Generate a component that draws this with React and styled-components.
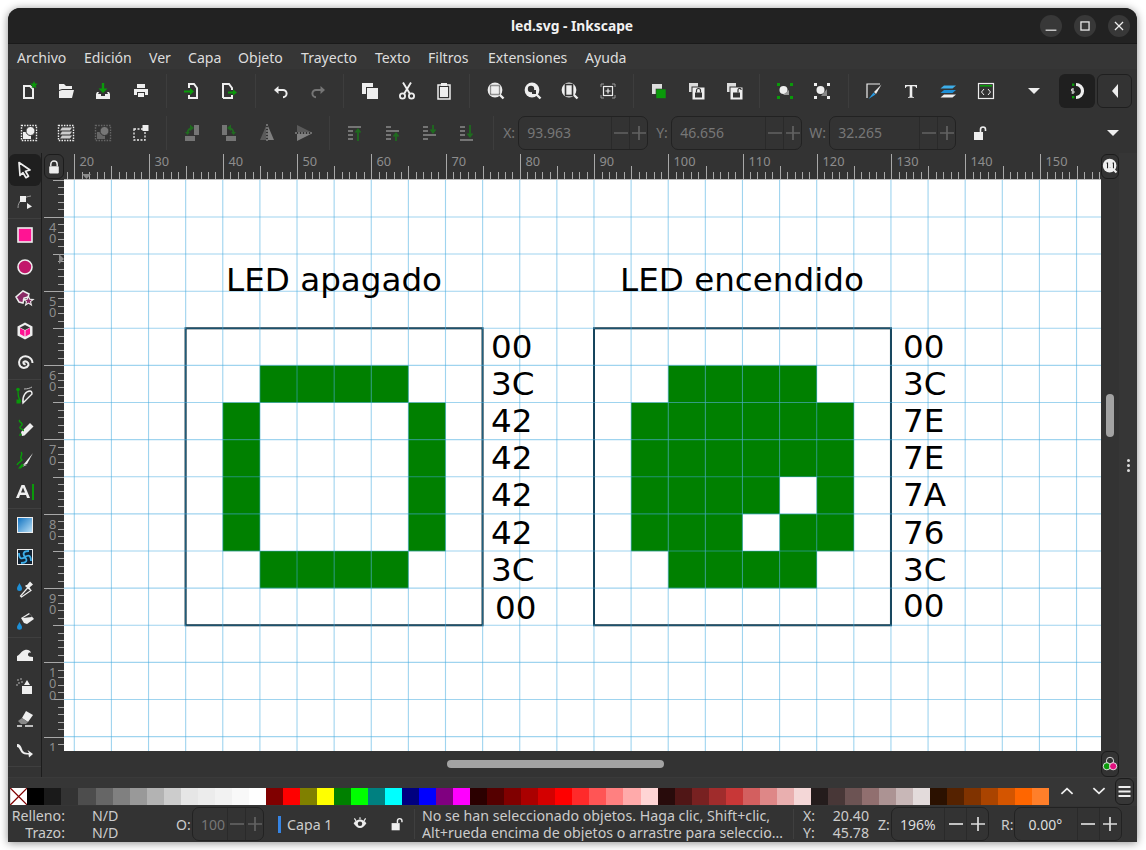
import React from "react";
import styled, { createGlobalStyle } from "styled-components";

const UI = `"Noto Sans", "Open Sans", sans-serif`;
const W = "#eee";
const G = "#0a9a0a";
const D = "#757575";
const DG = "#1f6b1f";

const Global = createGlobalStyle`
  html, body { margin: 0; padding: 0; background: #fff; }
  body { font-family: ${UI}; width: 1146px; height: 850px; overflow: hidden; }
`;

const Win = styled.div`
  margin: 8px 0 0 8px;
  width: 1129px;
  height: 834px;
  background: #333;
  border-radius: 12px 12px 0 0;
  box-shadow: 0 1px 9px rgba(0, 0, 0, 0.45);
  display: flex;
  flex-direction: column;
  overflow: hidden;
  color: #ddd;
`;
const TitleBar = styled.div`
  height: 36px;
  flex: none;
  box-sizing: border-box;
  background: #222;
  border-bottom: 1px solid #1a1a1a;
  display: flex;
  align-items: center;
  justify-content: center;
  position: relative;
`;
const Title = styled.div`
  font-weight: 700;
  font-size: 13.8px;
  color: #f2f2f2;
  margin-left: -1px;
`;
const WinButtons = styled.div`
  position: absolute;
  right: 7px;
  top: 7px;
  display: flex;
  gap: 12px;
`;
const WinBtn = styled.div`
  width: 22px;
  height: 22px;
  border-radius: 50%;
  background: #383838;
  display: flex;
  align-items: center;
  justify-content: center;
`;
const MenuBar = styled.div`
  height: 25px;
  flex: none;
  box-sizing: border-box;
  padding: 2px 0 0 9px;
  display: flex;
  align-items: center;
  font-size: 14.1px;
  color: #ddd;
  background: #363636;
`;
const MenuItem = styled.div`
  width: ${(p) => p.$w}px;
  white-space: nowrap;
`;
const Toolbar = styled.div`
  height: ${(p) => p.$h}px;
  flex: none;
  display: flex;
  align-items: center;
  padding-left: 2px;
  padding-right: 5px;
  box-sizing: border-box;
`;
const Tool = styled.div`
  width: 37.3px;
  height: 34px;
  flex: none;
  margin-left: ${(p) => p.$ml || 0}px;
  display: flex;
  align-items: center;
  justify-content: center;
`;
const Sep = styled.div`
  width: 1px;
  height: 34px;
  flex: none;
  margin: 0 6.6px;
  background: #3d3d3d;
`;
const Push = styled.div`
  margin-left: auto;
`;
const FlatBtn = styled.div`
  width: ${(p) => p.$w}px;
  height: 34px;
  flex: none;
  margin-left: ${(p) => p.$ml || 0}px;
  border-radius: 6px;
  background: ${(p) => (p.$on ? "#1f1f1f" : "#333")};
  border: ${(p) => (p.$on ? "none" : "1px solid #1f1f1f")};
  box-sizing: border-box;
  display: flex;
  align-items: center;
  justify-content: center;
`;
const FieldLabel = styled.div`
  font-size: 14px;
  color: ${(p) => (p.$dim ? "#777" : "#ccc")};
  width: ${(p) => p.$w}px;
  margin-left: ${(p) => p.$ml || 0}px;
  flex: none;
`;
const Spin = styled.div`
  width: ${(p) => p.$w}px;
  height: 34px;
  flex: none;
  margin-left: ${(p) => p.$ml || 0}px;
  box-sizing: border-box;
  border: 1px solid #222;
  border-radius: 7px;
  display: flex;
  align-items: stretch;
  font-size: 14px;
  color: ${(p) => (p.$dim ? "#777" : "#ddd")};
`;
const SpinValue = styled.div`
  flex: 1;
  padding-left: ${(p) => p.$pad}px;
  display: flex;
  align-items: center;
  white-space: nowrap;
`;
const SpinStep = styled.div`
  width: ${(p) => p.$w}px;
  flex: none;
  border-left: 1px solid #2a2a2a;
  display: flex;
  align-items: center;
  justify-content: center;
`;
const Main = styled.div`
  height: 624px;
  flex: none;
  display: flex;
`;
const ToolBox = styled.div`
  width: 34px;
  flex: none;
  box-sizing: border-box;
  border-right: 1px solid #1c1c1c;
  padding-top: 1px;
  overflow: hidden;
`;
const BoxTool = styled.div`
  height: 32px;
  margin-left: 1px;
  width: 32px;
  border-radius: 6px;
  background: ${(p) => (p.$on ? "#1f1f1f" : "transparent")};
  display: flex;
  align-items: center;
  justify-content: center;
`;
const BoxSep = styled.div`
  height: 1px;
  background: #3f3f3f;
`;
const Board = styled.div`
  flex: none;
  width: 1077px;
  display: grid;
  grid-template-columns: 22px 1037px 18px;
  grid-template-rows: 26px 572px 26px;
`;
const CornerBtn = styled.div`
  margin: 1px 0 0 2px;
  box-sizing: border-box;
  border: 1px solid #1c1c1c;
  border-radius: 6px;
  display: flex;
  align-items: center;
  justify-content: center;
  height: 25px;
  width: 20px;
  background: #333;
`;
const ZoomBtn = styled(CornerBtn)`
  margin: 1px 0 0 0;
  width: 18px;
`;
const RulerSvg = styled.svg`
  display: block;
  background: #333;
  text {
    font-family: ${UI};
    font-size: 12.8px;
    fill: #8d8d8d;
  }
`;
const CanvasSvg = styled.svg`
  display: block;
  background: #fff;
  text {
    font-family: "DejaVu Sans", sans-serif;
    font-size: 32.6px;
    fill: #000;
  }
`;
const VScroll = styled.div`
  position: relative;
`;
const VThumb = styled.div`
  position: absolute;
  left: 5px;
  top: 215px;
  width: 8px;
  height: 43px;
  border-radius: 4px;
  background: #a3a3a3;
`;
const HScroll = styled.div`
  position: relative;
`;
const HThumb = styled.div`
  position: absolute;
  left: 383px;
  top: 9px;
  height: 8px;
  width: 217px;
  border-radius: 4px;
  background: #a3a3a3;
`;
const ModeBtn = styled(ZoomBtn)`
  margin: 0;
  height: 26px;
`;
const DotPane = styled.div`
  flex: 1;
  display: flex;
  flex-direction: column;
  align-items: center;
  justify-content: center;
  gap: 2px;
  background: #363636;
`;
const Dot = styled.div`
  width: 3px;
  height: 3px;
  border-radius: 50%;
  background: #ddd;
`;
const PaletteRow = styled.div`
  height: 29px;
  flex: none;
  display: flex;
  align-items: flex-end;
  padding: 0 3px 1px 2px;
  border-top: 1px solid #3a3a3a;
  box-sizing: border-box;
  background: #363636;
`;
const Swatch = styled.div`
  width: 17.04px;
  height: 17px;
  flex: none;
  background: ${(p) => p.$c};
`;
const NoneSwatch = styled.svg`
  width: 17.4px;
  height: 17px;
  flex: none;
  display: block;
`;
const PalArrow = styled.div`
  width: 32px;
  height: 26px;
  flex: none;
  display: flex;
  align-items: center;
  justify-content: center;
  align-self: flex-start;
`;
const PalMenu = styled.div`
  width: 19px;
  height: 27px;
  flex: none;
  box-sizing: border-box;
  border: 1px solid #1c1c1c;
  border-radius: 6px;
  display: flex;
  align-items: center;
  justify-content: center;
`;
const StatusBar = styled.div`
  height: 36px;
  flex: none;
  display: flex;
  align-items: center;
  font-size: 14.2px;
  color: #ccc;
  background: #333;
`;
const FillGrid = styled.div`
  width: 159px;
  flex: none;
  display: grid;
  grid-template-columns: 57px 1fr;
  column-gap: 27px;
  line-height: 17px;
`;
const FillLabel = styled.div`
  text-align: right;
  white-space: nowrap;
`;
const LayerBar = styled.div`
  width: 3px;
  height: 17px;
  margin-left: 14px;
  flex: none;
  background: #3584e4;
`;
const LayerName = styled.div`
  width: 58px;
  margin-left: 6px;
  flex: none;
`;
const StatusIcon = styled.div`
  width: ${(p) => p.$w}px;
  margin-left: ${(p) => p.$ml || 0}px;
  flex: none;
  display: flex;
  justify-content: center;
`;
const StatusSep = styled.div`
  width: 1px;
  height: 30px;
  flex: none;
  background: #3f3f3f;
  margin-right: ${(p) => p.$mr}px;
`;
const Message = styled.div`
  width: 371px;
  flex: none;
  line-height: 17px;
  white-space: nowrap;
  overflow: hidden;
`;
const CoordGrid = styled.div`
  width: 66px;
  flex: none;
  display: grid;
  grid-template-columns: 22px 1fr;
  line-height: 17px;
  text-align: right;
  span:nth-child(odd) {
    text-align: left;
  }
`;

/* icons */
const Svg = styled.svg`
  display: block;
  flex: none;
`;
const Ico = ({ s = 20, children }) => (
  <Svg width={s} height={s} viewBox="0 0 20 20">
    {children}
  </Svg>
);
const lens = (inner) => (
  <>
    <path d="M13 13l4.5 4.5" stroke={W} strokeWidth="2.4" />
    <circle cx="9" cy="9" r="7.4" fill={W} />
    {inner}
  </>
);
const star = (c, x, y, r) => {
  let d = "";
  for (let i = 0; i < 10; i++) {
    const a = (i * Math.PI) / 5 - Math.PI / 2;
    const q = i % 2 ? r * 0.42 : r;
    d += `${i ? "L" : "M"}${(x + q * Math.cos(a)).toFixed(1)} ${(y + q * Math.sin(a)).toFixed(1)}`;
  }
  return <path d={d + "z"} fill={c} />;
};
const lockIn = (c, open) => (
  <>
    <rect x="9" y="11.5" width="7" height="5" fill={c} />
    <path
      d={open ? "M14 11.5V9a1.6 1.6 0 0 1 3.200 0" : "M10.500 11.500V9.500a2 2 0 0 1 4 0v2"}
      fill="none"
      stroke={c}
      strokeWidth="1.200"
    />
  </>
);
const handles = (c) => (
  <g fill={c}>
    <rect x="2" y="2" width="3" height="3" />
    <rect x="15" y="2" width="3" height="3" />
    <rect x="2" y="15" width="3" height="3" />
    <rect x="15" y="15" width="3" height="3" />
  </g>
);
const dotted = (c) => <rect x="2.5" y="2.5" width="15" height="15" fill="none" stroke={c} strokeWidth="1.4" strokeDasharray="1.5 1.2" />;
/* align icons: four bars, one of them long, and an arrow */
const alignBars = (ys, long, arrow) => (
  <>
    {ys.map((y, i) => (
      <rect key={y} x="3" y={y} width={i === long ? 13 : 5} height="2" fill={D} />
    ))}
    <path d={arrow} stroke={DG} strokeWidth="1.800" fill="none" />
  </>
);

const icons = {
  new: (<><path d="M5 5h6l3 3v9H5z" fill="none" stroke={W} strokeWidth="2" />{star(G, 15, 4, 4)}</>),
  open: <path d="M3 3h5l2 2h6v3H6l-3 1zM3 10l3-1h12l-2 8H3z" fill={W} />,
  save: (<><path d="M10 2v8" stroke={G} strokeWidth="2.400" /><path d="M5.500 7.500L10 12l4.500-4.500z" fill={G} /><path d="M4 11l-1 2v5h14v-5l-1-2h-2l1 2h-3v2H8v-2H5l1-2z" fill={W} /></>),
  print: <path d="M6 3h8v4H6zM3 8h14v6h-3v-3H6v3H3zM7 12h6v4H7z" fill={W} />,
  imp: (<><path d="M7 7V3h5l3 4v10H7v-3" fill="none" stroke={W} strokeWidth="2" /><path d="M2 10.500h7" stroke={G} strokeWidth="2" /><path d="M8 7l4 3.500L8 14z" fill={G} /></>),
  exp: (<><path d="M4 17V3h6l3 4v2M13 14v3H4" fill="none" stroke={W} strokeWidth="2" /><path d="M9 11.500h6" stroke={G} strokeWidth="2" /><path d="M14 8.500l4 3-4 3z" fill={G} /></>),
  undo: (<><path d="M6 9h6a3.600 3.600 0 0 1 0 7.200" fill="none" stroke={W} strokeWidth="2" /><path d="M7.500 5L3 9l4.500 4z" fill={W} /></>),
  redo: (<><path d="M14 9H8a3.600 3.600 0 0 0 0 7.200" fill="none" stroke={D} strokeWidth="2" /><path d="M12.500 5L17 9l-4.500 4z" fill={D} /></>),
  copy: (<><rect x="2" y="2" width="11" height="11" fill={W} /><rect x="6.500" y="6.500" width="12" height="12" fill={W} stroke="#333" /></>),
  cut: (<><circle cx="5.500" cy="15" r="2.600" fill="none" stroke={W} strokeWidth="1.800" /><circle cx="14.500" cy="15" r="2.600" fill="none" stroke={W} strokeWidth="1.800" /><path d="M7 13L14 1.500M13 13L6 1.500" stroke={W} strokeWidth="1.900" /></>),
  paste: (<><path d="M4 4h12v14H4z" fill="none" stroke={W} strokeWidth="1.500" /><path d="M7 2h6v3H7z" fill={W} /><path d="M6 6h8v10H6z" fill={W} /></>),
  zsel: lens(<rect x="4.500" y="4.500" width="9" height="9" fill="none" stroke="#333" strokeWidth="1.300" strokeDasharray="1 1" />),
  zdraw: lens(<><circle cx="8" cy="8" r="3.200" fill="#333" /><rect x="9" y="9" width="4" height="4" fill="#333" /></>),
  zpage: lens(<rect x="5.500" y="3.500" width="7" height="11" fill={W} stroke="#333" strokeWidth="1.600" />),
  zcenter: (<><path d="M3 6V3h3M14 3h3v3M3 14v3h3M14 17h3v-3" stroke="#999" fill="none" /><rect x="5.500" y="5.500" width="9" height="9" fill="none" stroke={W} strokeWidth="1.200" /><path d="M10 7.500v5M7.500 10h5" stroke={W} strokeWidth="1.200" /></>),
  dup: (<><rect x="3" y="3" width="10" height="10" fill="#ddd" /><rect x="7" y="8" width="10" height="9.500" fill={G} stroke="#333" strokeWidth="0.600" /></>),
  clone: (<><rect x="3" y="2" width="9" height="9" fill="#ddd" /><rect x="6" y="6" width="13" height="13" fill={W} stroke="#333" />{lockIn("#333")}</>),
  unclone: (<><rect x="3" y="2" width="9" height="9" fill="#ddd" /><rect x="6" y="6" width="13" height="13" fill={W} stroke="#333" />{lockIn("#333", true)}</>),
  group: (<>{handles(G)}<circle cx="8.500" cy="9" r="4" fill={W} /><path d="M8 14h6V9z" fill="#999" /></>),
  ungroup: (<>{handles(W)}<circle cx="8.500" cy="9" r="4" fill={W} /><path d="M9 15h6V8z" fill="#888" /></>),
  fillstroke: (<><path d="M3 17V3h13" fill="none" stroke={W} strokeWidth="1.200" /><path d="M17.500 3.500L10 11l2 2z" fill={W} /><path d="M9.500 11.500l2 2-7 4.500z" fill="#2a9ae0" /></>),
  text: <path d="M4 4h12v3h-.8c-.2-1-.7-1.700-2-1.700h-1.900V15c0 .8.400 1 1.700 1v.700H7v-.7c1.300 0 1.700-.2 1.700-1V5.300H6.800c-1.300 0-1.800.7-2 1.700H4z" fill={W} />,
  layers: (<><path d="M6 4.500h12l-3.500 3H2.500z" fill="#3daee9" /><path d="M6 9h12l-3.500 3H2.500z" fill="#1d8fd6" /><path d="M6 13.500h12l-3.500 3H2.500z" fill={W} /></>),
  xml: (<><rect x="2.500" y="2.500" width="15" height="15" fill="none" stroke={W} strokeWidth="1.200" /><rect x="4" y="4" width="12" height="1.600" fill={G} /><path d="M8 8l-2.500 3L8 14M12 8l2.500 3-2.500 3" fill="none" stroke={W} strokeWidth="1" /></>),
  down: <path d="M4 7h12l-6 6z" fill={W} />,
  snap: (<><path d="M9 3.500a6.500 6.500 0 0 1 0 13" fill="none" stroke={W} strokeWidth="3.200" /><rect x="5" y="2.500" width="2.400" height="2.400" fill={G} /><rect x="5" y="15" width="2.400" height="2.400" fill={G} /><path d="M7 8H4.500v2H7v2H4.500M5.800 7.200v5.600" fill="none" stroke={W} strokeWidth="0.800" /></>),
  left: <path d="M13 3v14l-6-7z" fill={W} />,
  lockOpen: (<><rect x="4" y="9" width="9" height="8" fill={W} /><path d="M10.500 9V6.500a2.500 2.500 0 0 1 5 0V8" fill="none" stroke={W} strokeWidth="1.600" /></>),
  selAll: (<>{dotted(W)}<rect x="4" y="9" width="8" height="7" fill={W} /><circle cx="11.500" cy="8" r="4.500" fill={W} stroke="#333" /></>),
  selLayers: (<>{dotted(W)}<path d="M6 4.500h10l-2 3H4zM6 8.500h10l-2 3H4zM6 12.500h10l-2 3H4z" fill="#ccc" /></>),
  selDim: (<>{dotted("#666")}<rect x="4" y="9" width="8" height="7" fill="#666" /><circle cx="11.500" cy="8" r="4.500" fill="#777" stroke="#333" /></>),
  touch: (<><rect x="3" y="6" width="11" height="11" fill="none" stroke={W} strokeDasharray="2 1.500" strokeWidth="1.300" /><rect x="11.500" y="2" width="6" height="6" fill={W} /></>),
  rotL: (<><rect x="12" y="2" width="5" height="10" fill={D} /><rect x="3" y="13" width="10" height="5" fill={D} /><path d="M10.500 5a5 5 0 0 0-5 5" stroke={DG} strokeWidth="2" fill="none" /><path d="M8 1.500L12 5 8 8z" fill={DG} /><path d="M3 9h5l-2.500 3z" fill={DG} /></>),
  rotR: (<><rect x="3" y="2" width="5" height="10" fill={D} /><rect x="7" y="13" width="10" height="5" fill={D} /><path d="M9.500 5a5 5 0 0 1 5 5" stroke={DG} strokeWidth="2" fill="none" /><path d="M12 1.500L8 5l4 3z" fill={DG} /><path d="M17 9h-5l2.500 3z" fill={DG} /></>),
  flipH: (<><path d="M9 3v14H3z" fill="#5a5a5a" /><path d="M11 3v14h6z" fill="#808080" /><path d="M10 1v18" stroke="#aaa" strokeDasharray="2 1" /></>),
  flipV: (<><path d="M3 2l14 7H3z" fill="#5a5a5a" /><path d="M3 11h14L3 18z" fill="#808080" /><path d="M1 10h18" stroke="#aaa" strokeDasharray="2 1" /></>),
  top: alignBars([3, 7, 11, 15], 0, "M13 18V7M10.500 9.500L13 6.500l2.500 3"),
  raise: alignBars([3, 7, 11, 15], 1, "M13 18v-7M10.500 13.500l2.500-3 2.500 3"),
  lower: alignBars([3, 7, 11, 15], 2, "M13 2v7M10.500 6.500l2.500 3 2.500-3"),
  bottom: alignBars([3, 7, 11, 16], 3, "M13 2v11M10.500 10.500l2.500 3 2.500-3"),
  arrow: <path d="M4 2.500l11 7.500-4.500 1.200 3 5-2.500 1.500-3-5L5 15.500z" fill="#1f1f1f" stroke={W} strokeWidth="1.700" strokeLinejoin="round" />,
  node: (<><path d="M3 16c0-7 5-11 13-12" fill="none" stroke="#999" /><rect x="5" y="4" width="6" height="6" fill={W} /><path d="M12 11l5 3.500-5 2.500z" fill={W} /></>),
  rect: <rect x="3" y="3" width="14" height="14" fill="#ff1493" stroke={W} strokeWidth="1.600" />,
  circle: <circle cx="10" cy="10" r="7" fill="#c2186b" stroke={W} strokeWidth="1.600" />,
  star: (<><path d="M8 2l6 3-1 3-4 1-1 5-4-1-3-5z" fill="#8a2a66" stroke={W} strokeWidth="1.500" />{star(W, 13.500, 12, 6.500)}{star("#8a2a66", 13.500, 12, 3.500)}</>),
  box: (<><path d="M10 1.500l7.500 4v9l-7.500 4-7.500-4v-9z" fill={W} /><path d="M5 7l4.500 2.500v6L5 13z" fill="#ff1493" /><path d="M15 7l-4.500 2.500v6L15 13z" fill="#ff1493" /><path d="M10 4l5 2.500L10 9 5 6.500z" fill="#333" /></>),
  spiral: <path d="M10.500 11a1.500 1.500 0 0 1-2-2 3.200 3.200 0 0 1 5 3 5 5 0 0 1-8 1.500A6.200 6.200 0 0 1 6 5a7 7 0 0 1 11.500 5" fill="none" stroke={W} strokeWidth="2" />,
  pen: (<><path d="M3 4c0 5 0 8 3 12" fill="none" stroke={G} strokeWidth="1.200" /><circle cx="3" cy="3.500" r="1.800" fill={G} /><rect x="1.500" y="13.500" width="4" height="4" fill={G} /><path d="M9 3c4 0 6-1 8-2" fill="none" stroke="#bbb" /><path d="M8 17l9-9c0-2-.5-3-2-3-4 0-8 5-7 12z" fill="#333" stroke={W} strokeWidth="1.400" /></>),
  pencil: (<><path d="M7 18l-1-4 9-9 3.500 3.500-9 9z" fill={W} /><path d="M4 18l3-1-2-2z" fill={G} /><path d="M5 2c-3 2 5 3 1 6s4 3 2 5" fill="none" stroke={G} strokeWidth="1.500" /></>),
  calli: (<><path d="M9 14L18 3l-6 11z" fill={W} /><path d="M9 13.500l3 1.500-5 2z" fill="#bbb" /><path d="M3 18.500l4-5 2 2-3 3z" fill={G} /><path d="M6 2c3 3-3 5 1 8-2 2-4 3-5 5" fill="none" stroke={G} strokeWidth="1.400" /></>),
  atext: (<><path d="M1 16L6.500 3h3L15 16h-3l-1-3H5l-1 3zM6 10.500h4L8 5.500z" fill={W} fillRule="evenodd" /><rect x="17" y="2" width="2" height="16" fill={G} /></>),
  grad: (<><defs><linearGradient id="gr" x1="0" y1="0" x2="1" y2="1"><stop offset="0" stopColor="#0b6fbf" /><stop offset="1" stopColor="#bfe3f8" /></linearGradient></defs><rect x="2.500" y="2.500" width="15" height="15" fill="url(#gr)" stroke={W} /></>),
  mesh: (<><rect x="2.500" y="2.500" width="15" height="15" fill="#123" stroke={W} /><path d="M10 10C7 6 9 4 14 4M10 10c4-3 6-1 6 4M10 10c3 4 1 6-4 6M10 10c-4 3-6 1-6-4" fill="none" stroke="#3daee9" strokeWidth="1.800" /></>),
  dropper: (<><path d="M4.500 4C3 7 2 8 2 9.500a2.500 2.500 0 0 0 5 0C7 8 6 7 4.500 4z" fill="#1d8fd6" /><path d="M6.500 18L5.500 17l7.500-8.500 3 3z" fill="#333" stroke={W} strokeWidth="1.200" /><path d="M12 6l3-3.500 3 3-3.500 3 1 1-1.500 1-4-3.500 1-1z" fill={W} /></>),
  bucket: (<><path d="M9 12l-3-5 8-5 5 6-7 5z" fill={W} /><path d="M8 7l7-4 2 3z" fill="#333" /><path d="M4.500 11C3 14 2 15 2 16.300a2.500 2.500 0 0 0 5 0c0-1.300-1-2.300-2.500-5.300z" fill="#1d8fd6" /></>),
  tweak: <path d="M2 17v-5c3-1 4-5 8-6 3-.8 6 1 6 3-2-1-3 0-3 2 0 1 2 2 5 2v4z" fill={W} />,
  spray: (<><path d="M9 9l3-5 3 5zM7 10h10v8H7z" fill={W} /><g fill="#888"><circle cx="3" cy="4" r="1" /><circle cx="6" cy="3" r="1" /><circle cx="4" cy="7" r="1" /><circle cx="7" cy="6" r="1" /><circle cx="2" cy="9" r="1" /></g></>),
  eraser: (<><path d="M11 3l7 4-5 7-6-4z" fill={W} /><path d="M7 10l6 4-2 2H6l-3-3z" fill="#888" /><path d="M2 18h5M10 18h8" stroke={W} strokeWidth="1.600" /></>),
  conn: <path d="M2 4c3 0 4 2 5 5s3 4 7 4l-1.500-3 5.500 4-4 3.500-.5-3C9 15 7 14 5 10 4 8 3.500 7 2 7z" fill={W} />,
  sliver: <rect x="5" y="7" width="10" height="2" fill={W} />,
  lock: (<><path d="M6 9V6.500a4 4 0 0 1 8 0V9" fill="none" stroke={W} strokeWidth="1.800" /><rect x="4" y="9" width="12" height="9" rx="1" fill={W} /></>),
  one: (<><path d="M12 12l5 5" stroke={W} strokeWidth="2.400" /><circle cx="9" cy="9" r="8" fill={W} /><path d="M5.500 6h1v6M9.500 7v.1M9.500 11v.1M12.500 6h1v6" stroke="#222" strokeWidth="1.300" fill="none" /></>),
  mode: (<><circle cx="10" cy="6.500" r="4" fill="none" stroke={W} /><circle cx="6.500" cy="12.500" r="4" fill={G} stroke={W} /><circle cx="13.500" cy="12.500" r="4" fill="#e0107f" stroke={W} /></>),
  eye: (<><path d="M2 9c2.500-3 5-4.500 8-4.500S15.500 6 18 9c-2 3-4.500 6-8 6s-6-3-8-6z" fill={W} /><circle cx="10" cy="9.800" r="2.800" fill="#333" /><path d="M3 3l2 3M17 3l-2 3M10 1.500v2.500" stroke={W} strokeWidth="1.500" /></>),
  up: <path d="M3 13.500L10 7l7 6.500" fill="none" stroke={W} strokeWidth="2.200" />,
  dn: <path d="M3 6.500L10 13l7-6.500" fill="none" stroke={W} strokeWidth="2.200" />,
  burger: <path d="M2 4h16M2 10h16M2 16h16" stroke={W} strokeWidth="2.400" />,
  min: <rect x="4" y="14" width="12" height="1.300" fill={W} />,
  max: <rect x="5.500" y="5.500" width="9" height="9" fill="none" stroke={W} strokeWidth="1.400" />,
  close: <path d="M5.500 5.500l9 9M14.500 5.500l-9 9" stroke={W} strokeWidth="1.400" />,
};

const Icon = ({ n, s }) => <Ico s={s}>{icons[n]}</Ico>;

const StepGlyph = ({ c, plus }) => (
  <Svg width="16" height="16" viewBox="0 0 16 16">
    <path d={plus ? "M1 8h14M8 1v14" : "M1 8h14"} stroke={c} strokeWidth="1.700" />
  </Svg>
);

const Spinner = ({ w, ml, value, pad, dim, sw = 17 }) => {
  const c = dim ? "#636363" : "#ddd";
  return (
    <Spin $w={w} $ml={ml} $dim={dim}>
      <SpinValue $pad={pad}>{value}</SpinValue>
      <SpinStep $w={sw}><StepGlyph c={c} /></SpinStep>
      <SpinStep $w={sw}><StepGlyph c={c} plus /></SpinStep>
    </Spin>
  );
};

const menu = [
  ["Archivo", 67], ["Edición", 65], ["Ver", 39], ["Capa", 50], ["Objeto", 63],
  ["Trayecto", 74], ["Texto", 53], ["Filtros", 60], ["Extensiones", 97], ["Ayuda", 50],
];
const bar1 = [
  ["new", "open", "save", "print"], ["imp", "exp"], ["undo", "redo"], ["copy", "cut", "paste"],
  ["zsel", "zdraw", "zpage", "zcenter"], ["dup", "clone", "unclone"], ["group", "ungroup"],
  ["fillstroke", "text", "layers", "xml"],
];
const bar2 = [
  ["selAll", "selLayers", "selDim", "touch"], ["rotL", "rotR", "flipH", "flipV"], ["top", "raise", "lower", "bottom"],
];
const tools = [
  ["arrow", "node"], ["rect", "circle", "star", "box", "spiral"], ["pen", "pencil", "calli", "atext"],
  ["grad", "mesh", "dropper", "bucket"], ["tweak", "spray", "eraser", "conn"], ["sliver"],
];
const swatches = [
  "#000000", "#1a1a1a", "#333333", "#4d4d4d", "#666666", "#808080", "#999999", "#b3b3b3", "#cccccc", "#e6e6e6", "#ececec", "#f2f2f2", "#f9f9f9", "#ffffff",
  "#800000", "#ff0000", "#808000", "#ffff00", "#008000", "#00ff00", "#008080", "#00ffff", "#000080", "#0000ff", "#800080", "#ff00ff",
  "#2b0000", "#550000", "#800000", "#aa0000", "#d40000", "#ff0000", "#ff2a2a", "#ff5555", "#ff8080", "#ffaaaa", "#ffd5d5",
  "#280b0b", "#501616", "#782121", "#a02c2c", "#c83737", "#d35f5f", "#de8787", "#e9afaf", "#f4d7d7",
  "#241c1c", "#483737", "#6c5353", "#916f6f", "#ac9393", "#c8b7b7", "#e3dbdb",
  "#2b1100", "#552200", "#803300", "#aa4400", "#d45500", "#ff6600", "#ff7f2a",
];

const UNIT = 7.426;
const TopRuler = () => {
  const ticks = [];
  const labels = [];
  for (let u = -1; u <= 140; u++) {
    const x = Math.round(10.3 + u * UNIT) + 0.5;
    const h = u % 10 === 0 ? 25 : u % 5 === 0 ? 13 : 7;
    ticks.push(<path key={u} d={`M${x} 26v-${h}`} stroke="#a8a8a8" />);
    if (u % 10 === 0 && u < 140) {
      labels.push(<text key={u} x={x + 5} y={13}>{20 + u}</text>);
    }
  }
  return (
    <RulerSvg width="1037" height="26" viewBox="0 0 1037 26">
      {ticks}
      {labels}
      <path d="M18 21h9l-4.500 5z" fill="#8a8a8a" />
    </RulerSvg>
  );
};
const LeftRuler = () => {
  const ticks = [];
  const labels = [];
  for (let u = -5; u <= 77; u++) {
    const y = Math.round(37.7 + u * UNIT) + 0.5;
    const w = u % 10 === 0 ? 20 : u % 5 === 0 ? 11 : 6;
    ticks.push(<path key={u} d={`M22 ${y}h-${w}`} stroke="#a8a8a8" />);
    if (u % 10 === 0) {
      // digits stacked one over the other, as the vertical ruler draws them
      labels.push(
        <text key={u} y={y + 14}>
          {String(40 + u).split("").map((ch, i) => (
            <tspan key={i} x={7} dy={i ? 11.5 : 0}>{ch}</tspan>
          ))}
        </text>
      );
    }
  }
  return (
    <RulerSvg width="22" height="572" viewBox="0 0 22 572">
      {ticks}
      {labels}
      <path d="M17 75l5 5-5 5z" fill="#8a8a8a" />
    </RulerSvg>
  );
};

const off = [
  "........", "..####..", ".#....#.", ".#....#.", ".#....#.", ".#....#.", "..####..", "........",
];
const on = [
  "........", "..####..", ".######.", ".######.", ".####.#.", ".###.##.", "..####..", "........",
];
const STEP = 37.12;
const LedGrid = ({ x, rows }) => (
  <>
    {rows.map((row, r) =>
      row.split("").map((c, i) =>
        c === "#" ? (
          <rect key={`${r}-${i}`} x={x + i * STEP} y={328.3 + r * STEP} width={STEP + 0.2} height={STEP + 0.2} fill="#008000" />
        ) : null
      )
    )}
    <rect x={x} y={328.3} width={STEP * 8} height={STEP * 8} fill="none" stroke="#06202c" strokeWidth="2" />
  </>
);
const Canvas = () => {
  const vs = [];
  const hs = [];
  for (let k = 0; k < 28; k++) vs.push(74.3 + k * STEP);
  for (let k = -3; k < 12; k++) hs.push(328.3 + k * STEP);
  const hexL = ["00", "3C", "42", "42", "42", "42", "3C"];
  const hexR = ["00", "3C", "7E", "7E", "7A", "76", "3C"];
  return (
    <CanvasSvg width="1037" height="572" viewBox="64 179 1037 572">
      <LedGrid x={185.6} rows={off} />
      <LedGrid x={594} rows={on} />
      {vs.map((x) => <path key={x} d={`M${x} 179v572`} stroke="#3fa9e0" strokeOpacity="0.5" strokeWidth="1.100" />)}
      {hs.map((y) => <path key={y} d={`M64 ${y}h1037`} stroke="#3fa9e0" strokeOpacity="0.5" strokeWidth="1.100" />)}
      <path d="M64 179.500h1037" stroke="#bbb" />
      <text x={226} y={291}>LED apagado</text>
      <text x={620} y={291}>LED encendido</text>
      {hexL.map((t, i) => <text key={i} x={491} y={358 + i * STEP}>{t}</text>)}
      <text x={495} y={619}>00</text>
      {hexR.map((t, i) => <text key={i} x={903} y={358 + i * STEP}>{t}</text>)}
      <text x={903} y={617}>00</text>
    </CanvasSvg>
  );
};

const ToolGroups = ({ groups }) =>
  groups.map((g, i) => (
    <React.Fragment key={i}>
      {i > 0 && <Sep />}
      {g.map((n) => <Tool key={n}><Icon n={n} /></Tool>)}
    </React.Fragment>
  ));

export default function App() {
  return (
    <Win>
      <Global />
      <TitleBar>
        <Title>led.svg - Inkscape</Title>
        <WinButtons>
          <WinBtn><Icon n="min" s={18} /></WinBtn>
          <WinBtn><Icon n="max" s={18} /></WinBtn>
          <WinBtn><Icon n="close" s={18} /></WinBtn>
        </WinButtons>
      </TitleBar>
      <MenuBar>
        {menu.map(([t, w]) => <MenuItem key={t} $w={w}>{t}</MenuItem>)}
      </MenuBar>
      <Toolbar $h={43}>
        <ToolGroups groups={bar1} />
        <Push />
        <Tool><Icon n="down" /></Tool>
        <FlatBtn $w={36} $ml={6} $on><Icon n="snap" /></FlatBtn>
        <FlatBtn $w={35} $ml={2}><Icon n="left" /></FlatBtn>
      </Toolbar>
      <Toolbar $h={41}>
        <ToolGroups groups={bar2} />
        <Sep />
        <FieldLabel $dim $w={15} $ml={3}>X:</FieldLabel>
        <Spinner w={130} dim value="93.963" pad={8} />
        <FieldLabel $dim $w={15} $ml={8}>Y:</FieldLabel>
        <Spinner w={131} dim value="46.656" pad={8} />
        <FieldLabel $dim $w={20} $ml={7}>W:</FieldLabel>
        <Spinner w={127} dim value="32.265" pad={8} />
        <Tool $ml={5}><Icon n="lockOpen" /></Tool>
        <Push />
        <Tool><Icon n="down" /></Tool>
      </Toolbar>
      <Main>
        <ToolBox>
          {tools.map((g, i) => (
            <React.Fragment key={i}>
              {i > 0 && <BoxSep />}
              {g.map((n) => <BoxTool key={n} $on={n === "arrow"}><Icon n={n} /></BoxTool>)}
            </React.Fragment>
          ))}
        </ToolBox>
        <Board>
          <CornerBtn><Icon n="lock" s={16} /></CornerBtn>
          <TopRuler />
          <ZoomBtn><Icon n="one" s={17} /></ZoomBtn>
          <LeftRuler />
          <Canvas />
          <VScroll><VThumb /></VScroll>
          <div />
          <HScroll><HThumb /></HScroll>
          <ModeBtn><Icon n="mode" s={18} /></ModeBtn>
        </Board>
        <DotPane><Dot /><Dot /><Dot /></DotPane>
      </Main>
      <PaletteRow>
        <NoneSwatch viewBox="0 0 17 17">
          <rect width="17" height="17" fill="#fff" />
          <path d="M0 0l17 17M17 0L0 17" stroke="#800000" strokeWidth="1.300" />
        </NoneSwatch>
        {swatches.map((c, i) => <Swatch key={i} $c={c} />)}
        <Push />
        <PalArrow><Icon n="up" s={16} /></PalArrow>
        <PalArrow><Icon n="dn" s={16} /></PalArrow>
        <PalMenu><Icon n="burger" s={15} /></PalMenu>
      </PaletteRow>
      <StatusBar>
        <FillGrid>
          <FillLabel>Relleno:</FillLabel><div>N/D</div>
          <FillLabel>Trazo:</FillLabel><div>N/D</div>
        </FillGrid>
        <FieldLabel $w={16} $ml={9}>O:</FieldLabel>
        <Spinner w={72} dim value="100" pad={8} sw={17} />
        <LayerBar />
        <LayerName>Capa 1</LayerName>
        <StatusIcon $w={30}><Icon n="eye" s={16} /></StatusIcon>
        <StatusIcon $w={34} $ml={5}><Icon n="lockOpen" s={18} /></StatusIcon>
        <StatusSep $mr={7} />
        <Message>
          No se han seleccionado objetos. Haga clic, Shift+clic,<br />
          Alt+rueda encima de objetos o arrastre para seleccio…
        </Message>
        <StatusSep $mr={9} />
        <CoordGrid>
          <span>X:</span><span>20.40</span>
          <span>Y:</span><span>45.78</span>
        </CoordGrid>
        <FieldLabel $w={13} $ml={9}>Z:</FieldLabel>
        <Spinner w={98} value="196%" pad={8} sw={21} />
        <FieldLabel $w={12.5} $ml={12}>R:</FieldLabel>
        <Spinner w={108} value="0.00°" pad={14} sw={21} />
      </StatusBar>
    </Win>
  );
}
